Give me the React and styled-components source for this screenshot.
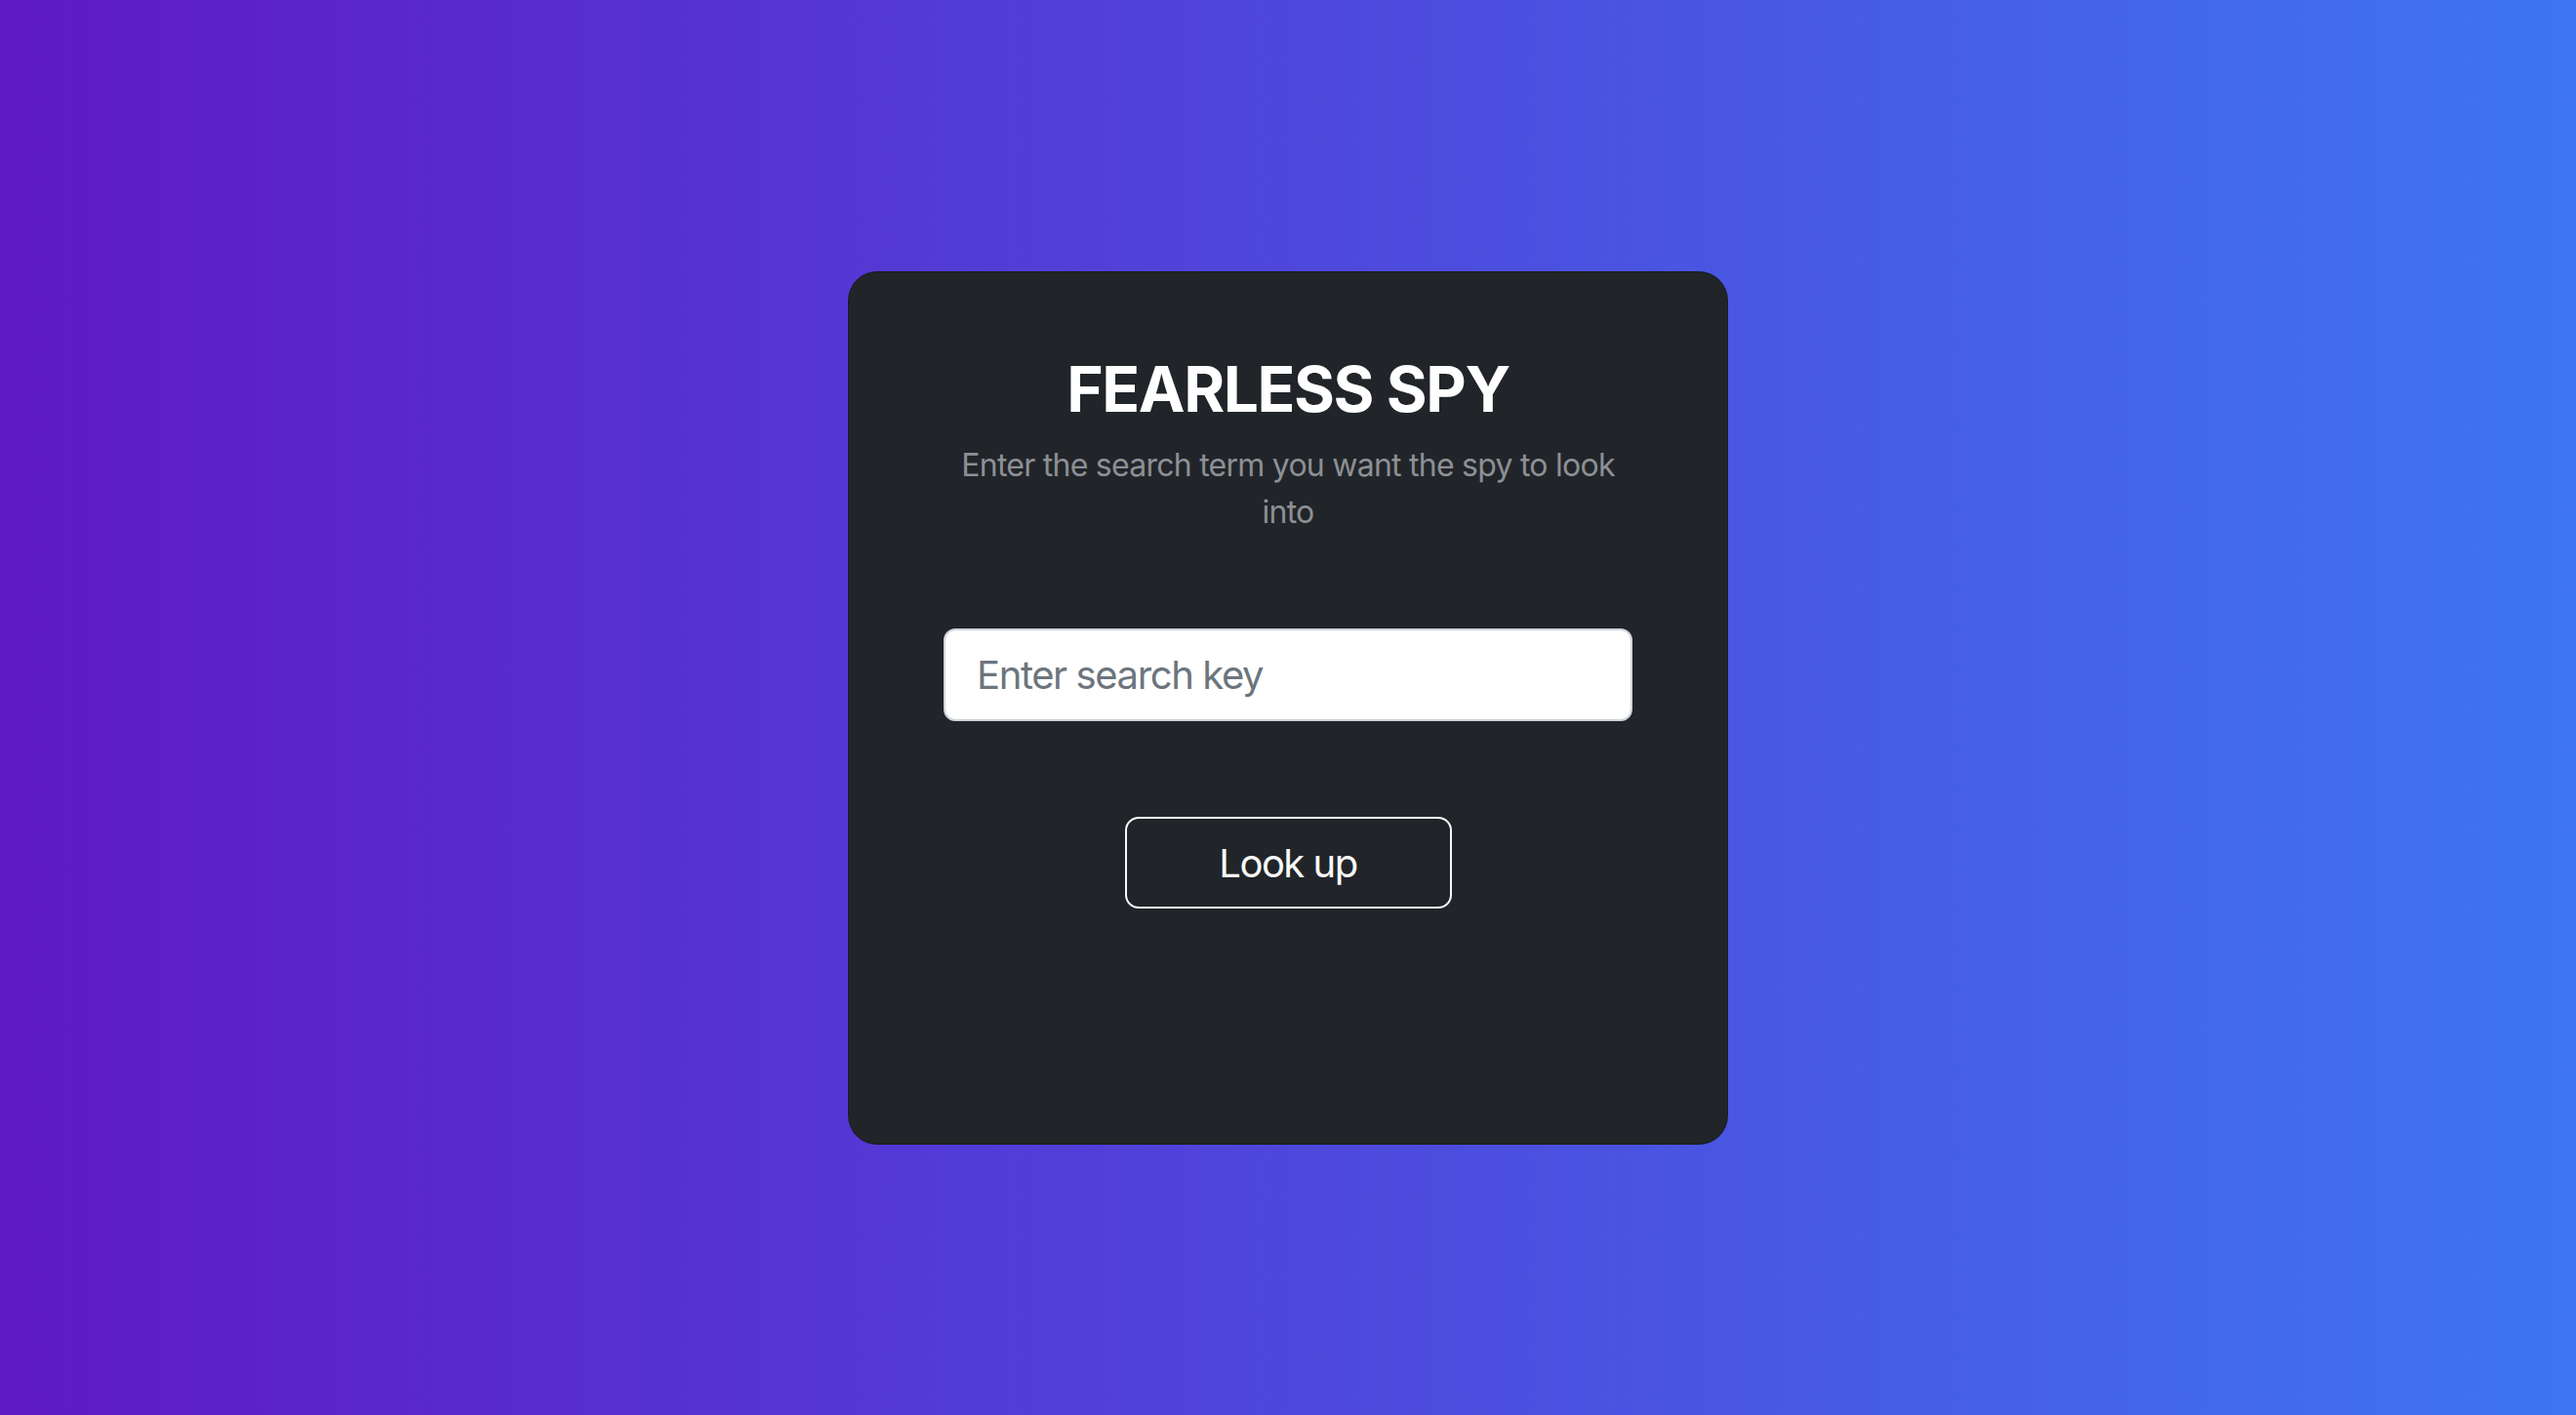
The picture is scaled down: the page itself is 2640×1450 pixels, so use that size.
import React from "react";
import styled, { createGlobalStyle } from "styled-components";

const GlobalStyle = createGlobalStyle`
  html, body { margin: 0; padding: 0; height: 100%; }
  body { font-family: Inter, "Noto Sans", "Liberation Sans", sans-serif; }
  #root { height: 100%; }
  * { box-sizing: border-box; }
`;

const Page = styled.main`
  width: 100%;
  min-height: 100vh;
  display: flex;
  align-items: center;
  justify-content: center;
  background: linear-gradient(to right, #5f19c5, #3e75f1);
`;

const Card = styled.section`
  width: 902px;
  height: 895px;
  padding: 82px 97px 80px;
  background: #212529;
  border: 1px solid rgba(0, 0, 0, 0.2);
  border-radius: 30px;
  display: flex;
  flex-direction: column;
  align-items: center;
  text-align: center;
`;

const Title = styled.h1`
  margin: 0 0 16px;
  font-size: 64px;
  line-height: 1.2;
  font-weight: 700;
  color: #ffffff;
  letter-spacing: -1.4px;
`;

const Subtitle = styled.p`
  margin: 0 0 95px;
  font-size: 32px;
  line-height: 48px;
  color: #8d9095;
  max-width: 700px;
  letter-spacing: -0.75px;
`;

const SearchInput = styled.input`
  width: 100%;
  height: 95px;
  padding: 16px 32px;
  font-family: inherit;
  font-size: 40px;
  letter-spacing: -1.4px;
  color: #212529;
  background: #ffffff;
  border: 2px solid #ced4da;
  border-radius: 12px;
  outline: none;
  margin-bottom: 98px;
  &::placeholder { color: #6c757d; }
`;

const LookupButton = styled.button`
  width: 335px;
  height: 94px;
  font-family: inherit;
  font-size: 40px;
  letter-spacing: -1.5px;
  color: #f8f9fa;
  background: transparent;
  border: 2px solid #f8f9fa;
  border-radius: 14px;
  cursor: pointer;
`;

export default function App() {
  return (
    <>
      <GlobalStyle />
      <Page>
        <Card>
          <Title>FEARLESS SPY</Title>
          <Subtitle>Enter the search term you want the spy to look into</Subtitle>
          <SearchInput placeholder="Enter search key" />
          <LookupButton>Look up</LookupButton>
        </Card>
      </Page>
    </>
  );
}
